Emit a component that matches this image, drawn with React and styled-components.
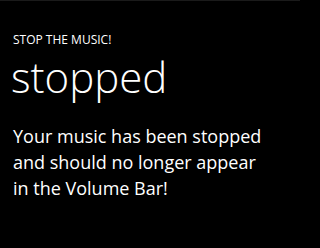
import styled, { createGlobalStyle } from "styled-components";

const GlobalStyle = createGlobalStyle`
  html, body {
    margin: 0;
    padding: 0;
    background: #000;
  }
`;

const Page = styled.div`
  width: 300px;
  height: 248px;
  box-sizing: border-box;
  background: #000;
  border-top: 1px solid #1a1a1a;
  padding: 30px 13px 0 13px;
  color: #fff;
  font-family: "Open Sans", "Noto Sans", sans-serif;
  overflow: hidden;
`;

const AppTitle = styled.div`
  font-size: 12px;
  line-height: 17px;
  font-weight: 400;
`;

const PageTitle = styled.h1`
  margin: 0 0 0 -2px;
  font-size: 42px;
  line-height: 57px;
  font-weight: 300;
`;

const Message = styled.p`
  max-width: 258px;
  margin: 18px 0 0 0;
  font-size: 18px;
  line-height: 26px;
  font-weight: 400;
`;

export default function App() {
  return (
    <>
      <GlobalStyle />
      <Page>
        <AppTitle>STOP THE MUSIC!</AppTitle>
        <PageTitle>stopped</PageTitle>
        <Message>
          Your music has been stopped and should no longer appear in the Volume Bar!
        </Message>
      </Page>
    </>
  );
}
